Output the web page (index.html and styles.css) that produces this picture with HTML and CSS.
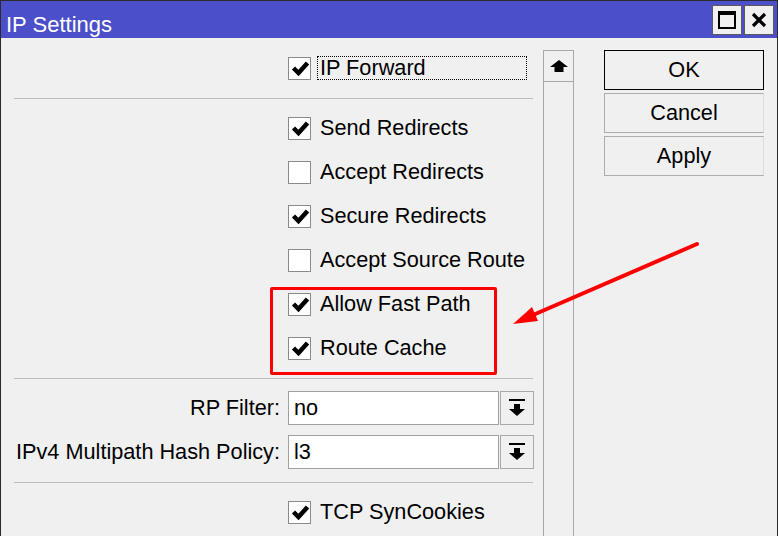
FILE: index.html
```html
<!DOCTYPE html>
<html lang="en">
<head>
    <meta charset="UTF-8">
    <title>IP Settings</title>
    <link rel="stylesheet" href="styles.css">
</head>
<body>
    <div class="window">
        <div class="titlebar">
            <span class="title">IP Settings</span>
            <div class="title-buttons">
                <div class="tbtn">
                    <svg width="20" height="20" viewBox="0 0 20 20"><rect x="2" y="2" width="16" height="16" fill="none" stroke="#000" stroke-width="2"/><rect x="2" y="2" width="16" height="3" fill="#000"/></svg>
                </div>
                <div class="tbtn">
                    <svg width="20" height="20" viewBox="0 0 20 20"><path d="M4 4 L16 16 M16 4 L4 16" stroke="#000" stroke-width="3.2"/></svg>
                </div>
            </div>
        </div>

        <div class="content">
            <div class="form">
                <div class="row check-row">
                    <span></span>
                    <label class="check focus">
                        <span class="box"><svg width="21" height="21" viewBox="0 0 21 21"><path d="M4.5 10 L9.5 15 L18.5 5" fill="none" stroke="#000" stroke-width="4.5"/></svg></span>
                        <span class="text">IP Forward</span>
                    </label>
                </div>

                <div class="sep"></div>

                <div class="row check-row">
                    <span></span>
                    <label class="check">
                        <span class="box"><svg width="21" height="21" viewBox="0 0 21 21"><path d="M4.5 10 L9.5 15 L18.5 5" fill="none" stroke="#000" stroke-width="4.5"/></svg></span>
                        <span class="text">Send Redirects</span>
                    </label>
                </div>
                <div class="row check-row">
                    <span></span>
                    <label class="check">
                        <span class="box"></span>
                        <span class="text">Accept Redirects</span>
                    </label>
                </div>
                <div class="row check-row">
                    <span></span>
                    <label class="check">
                        <span class="box"><svg width="21" height="21" viewBox="0 0 21 21"><path d="M4.5 10 L9.5 15 L18.5 5" fill="none" stroke="#000" stroke-width="4.5"/></svg></span>
                        <span class="text">Secure Redirects</span>
                    </label>
                </div>
                <div class="row check-row">
                    <span></span>
                    <label class="check">
                        <span class="box"></span>
                        <span class="text">Accept Source Route</span>
                    </label>
                </div>
                <div class="row check-row">
                    <span></span>
                    <label class="check">
                        <span class="box"><svg width="21" height="21" viewBox="0 0 21 21"><path d="M4.5 10 L9.5 15 L18.5 5" fill="none" stroke="#000" stroke-width="4.5"/></svg></span>
                        <span class="text">Allow Fast Path</span>
                    </label>
                </div>
                <div class="row check-row">
                    <span></span>
                    <label class="check">
                        <span class="box"><svg width="21" height="21" viewBox="0 0 21 21"><path d="M4.5 10 L9.5 15 L18.5 5" fill="none" stroke="#000" stroke-width="4.5"/></svg></span>
                        <span class="text">Route Cache</span>
                    </label>
                </div>

                <div class="sep sep-fields"></div>

                <div class="fields">
                    <div class="row field-row">
                        <span class="field-label">RP Filter:</span>
                        <div class="combo">
                            <div class="combo-value">no</div>
                            <div class="combo-btn">
                                <svg width="16" height="18" viewBox="0 0 16 18"><rect x="0" y="0" width="16" height="2" fill="#000"/><rect x="5" y="5" width="6" height="5" fill="#000"/><path d="M0 10 L16 10 L8 17 Z" fill="#000"/></svg>
                            </div>
                        </div>
                    </div>
                    <div class="row field-row">
                        <span class="field-label">IPv4 Multipath Hash Policy:</span>
                        <div class="combo">
                            <div class="combo-value">l3</div>
                            <div class="combo-btn">
                                <svg width="16" height="18" viewBox="0 0 16 18"><rect x="0" y="0" width="16" height="2" fill="#000"/><rect x="5" y="5" width="6" height="5" fill="#000"/><path d="M0 10 L16 10 L8 17 Z" fill="#000"/></svg>
                            </div>
                        </div>
                    </div>
                </div>

                <div class="sep sep-after"></div>

                <div class="row check-row">
                    <span></span>
                    <label class="check">
                        <span class="box"><svg width="21" height="21" viewBox="0 0 21 21"><path d="M4.5 10 L9.5 15 L18.5 5" fill="none" stroke="#000" stroke-width="4.5"/></svg></span>
                        <span class="text">TCP SynCookies</span>
                    </label>
                </div>
            </div>

            <div class="scrollbar">
                <div class="scroll-btn">
                    <svg width="18" height="12" viewBox="0 0 18 12"><path d="M0 7 L9 0 L18 7 Z" fill="#000"/><rect x="4.5" y="6" width="9" height="6" fill="#000"/></svg>
                </div>
            </div>

            <div class="actions">
                <button class="btn btn-default">OK</button>
                <button class="btn">Cancel</button>
                <button class="btn">Apply</button>
            </div>
        </div>

        <!-- annotation -->
        <div class="highlight"></div>
        <svg class="pointer" width="778" height="536" viewBox="0 0 778 536">
            <line x1="697" y1="244" x2="533" y2="315" stroke="#ff0000" stroke-width="4" stroke-linecap="round"/>
            <polygon points="513,324 538,321 532,307" fill="#ff0000"/>
        </svg>
    </div>
</body>
</html>
```

FILE: styles.css
```css
html, body {
    margin: 0;
    padding: 0;
    overflow: hidden;
    background: #f0f0f0;
}
body {
    font-family: "Liberation Sans", Arial, sans-serif;
    font-size: 21.7px;
    color: #000;
}
.window {
    position: relative;
    width: 776px;
    height: 620px;
    border: 1px solid #2b2b2b;
    border-right-width: 2px;
    background: #f0f0f0;
}
.titlebar {
    height: 37px;
    background: #4b4fc9;
    display: flex;
    align-items: center;
    justify-content: space-between;
}
.title {
    color: #fff;
    font-size: 22px;
    padding-left: 5px;
    margin-top: 10px;
}
.title-buttons {
    display: flex;
    gap: 2px;
    padding-right: 3px;
    padding-top: 1px;
}
.tbtn {
    width: 28px;
    height: 28px;
    background: #f0f0f0;
    border: 1px solid #5a5a5a;
    display: flex;
    align-items: center;
    justify-content: center;
}
.content {
    display: flex;
    align-items: flex-start;
}
.form {
    width: 519px;
    padding: 8px 0 0 13px;
}
.row {
    display: grid;
    grid-template-columns: 274px 1fr;
    align-items: center;
}
.check-row {
    height: 44px;
}
.check {
    display: flex;
    align-items: center;
}
.box {
    width: 21px;
    height: 21px;
    background: #fff;
    border: 1px solid #8a8a8a;
    display: flex;
}
.text {
    margin-left: 6px;
    padding: 0 2px;
    height: 22px;
    line-height: 22px;
    border: 1px solid transparent;
}
.focus .text {
    width: 204px;
    border: 1px dotted #000;
}
.sep {
    height: 1px;
    background: #bdbdbd;
    margin: 8px 0 7px;
}
.sep-fields {
    margin-bottom: 12px;
}
.sep-after {
    margin-top: 13px;
}
.fields {
    display: flex;
    flex-direction: column;
    gap: 10px;
}
.field-row {
    height: 34px;
}
.field-label {
    text-align: right;
    padding-right: 8px;
    white-space: nowrap;
}
.combo {
    display: flex;
    gap: 1px;
    height: 34px;
}
.combo-value {
    width: 204px;
    background: #fff;
    border: 1px solid #a0a0a0;
    padding-left: 5px;
    line-height: 32px;
}
.combo-btn {
    width: 32px;
    border: 1px solid #a8a8a8;
    display: flex;
    align-items: center;
    justify-content: center;
}
.scrollbar {
    width: 29px;
    height: 520px;
    margin: 12px 0 0 10px;
    border-left: 1px solid #a8a8a8;
    border-right: 1px solid #a8a8a8;
}
.scroll-btn {
    height: 30px;
    border-bottom: 1px solid #a8a8a8;
    border-top: 1px solid #a8a8a8;
    display: flex;
    align-items: center;
    justify-content: center;
}
.actions {
    display: flex;
    flex-direction: column;
    gap: 3px;
    margin: 12px 0 0 30px;
    width: 160px;
}
.btn {
    height: 40px;
    font-family: inherit;
    font-size: 21.7px;
    color: #000;
    background: #f0f0f0;
    border: 1px solid #adadad;
    border-right-color: #dcdcdc;
    padding: 0;
}
.btn-default {
    border: 1px solid #000;
}
.highlight {
    position: absolute;
    left: 269px;
    top: 286px;
    width: 221px;
    height: 82px;
    border: 3px solid #ff0000;
    border-radius: 2px;
}
.pointer {
    position: absolute;
    left: -1px;
    top: -1px;
}
```
